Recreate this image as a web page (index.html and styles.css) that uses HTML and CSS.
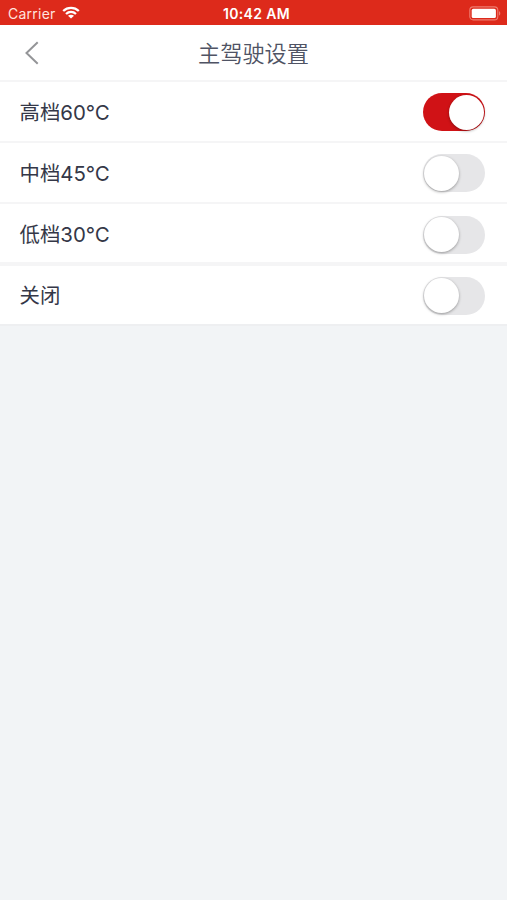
FILE: index.html
```html
<!DOCTYPE html>
<html lang="zh-CN">
<head>
<meta charset="utf-8">
<title>主驾驶设置</title>
<link rel="stylesheet" href="styles.css">
</head>
<body>
<div class="status">
  <div class="carrier">
    <span>Carrier</span>
    <svg class="wifi" width="18" height="13" viewBox="0 0 18 13" fill="none" stroke="#fff" stroke-width="2.3">
      <path d="M1.2 5C5.6.8 12.4.8 16.8 5"/>
      <path d="M4 8C6.9 5.3 11.1 5.3 14 8"/>
      <path d="M9 12.6L6 9.8C7.6 8.4 10.4 8.4 12 9.8Z" fill="#fff" stroke="none"/>
    </svg>
  </div>
  <div class="time">10:42 AM</div>
  <svg class="battery" width="32" height="15" viewBox="0 0 32 15">
    <rect x=".8" y=".9" width="28" height="13" rx="3.4" fill="none" stroke="#ee7c70" stroke-width="1.1"/>
    <rect x="2.7" y="2.8" width="24.2" height="9.2" rx="1.6" fill="#fff"/>
    <path d="M30 5.2C31.7 5.8 31.7 9 30 9.6Z" fill="#ee7c70"/>
  </svg>
</div>
<header class="navbar">
  <svg class="back" width="16" height="26" viewBox="0 0 16 26" fill="none" stroke="#949598" stroke-width="2">
    <path d="M13.7 2.3L2.5 13L13.7 23.7"/>
  </svg>
  <h1 class="title">主驾驶设置</h1>
</header>
<main class="list">
  <div class="row"><span class="label">高档60℃</span><span class="switch on"><i class="knob"></i></span></div>
  <div class="row"><span class="label">中档45℃</span><span class="switch"><i class="knob"></i></span></div>
  <div class="row row-group-end"><span class="label">低档30℃</span><span class="switch"><i class="knob"></i></span></div>
  <div class="row row-last"><span class="label">关闭</span><span class="switch"><i class="knob"></i></span></div>
</main>
</body>
</html>
```
FILE: styles.css
```css
* { box-sizing: border-box; }
body {
  margin: 0;
  min-height: 900px;
  background: #f2f4f6;
  color: #343747;
  font-family: Inter, "Noto Sans CJK SC", sans-serif;
}
.status {
  display: grid;
  grid-template-columns: 1fr auto 1fr;
  align-items: center;
  height: 25px;
  padding: 2px 6px 0 8px;
  background: #dd2a1b;
  color: #fff;
  font-size: 14px;
  line-height: 20px;
}
.carrier { display: flex; align-items: center; gap: 6px; color: #ffe3df; letter-spacing: .25px; }
.wifi { margin-bottom: 2px; }
.time { font-weight: 600; font-size: 14px; letter-spacing: .35px; margin-left: 4px; }
.battery { justify-self: end; margin-bottom: 1px; }
.navbar {
  display: grid;
  grid-template-columns: 40px 1fr 40px;
  align-items: center;
  height: 57px;
  padding: 1px 23px 0 24px;
  background: #fff;
  border-bottom: 2px solid #f5f5f6;
}
.title {
  margin: 2px 0 0 -1px;
  text-align: center;
  font-size: 22.2px;
  line-height: 32px;
  font-weight: 350;
  color: #4f5364;
}
.row {
  display: flex;
  align-items: center;
  justify-content: space-between;
  height: 61px;
  padding: 1px 22px 0 20px;
  background: #fff;
  border-bottom: 2px solid #f5f5f6;
}
.row-group-end { height: 62px; padding-top: 3px; border-bottom-width: 4px; }
.row-last { height: 60px; border-bottom-color: #eeeff1; }
.label {
  padding-top: 1px;
  font-size: 20.4px;
  line-height: 30px;
  margin-left: -.5px;
}
.switch {
  display: flex;
  width: 62.5px;
  height: 38px;
  padding: 1.5px;
  border-radius: 19px;
  background: #e6e6e8;
}
.switch.on { justify-content: flex-end; background: #d01216; }
.knob {
  width: 35px;
  height: 35px;
  border-radius: 50%;
  background: #fff;
  box-shadow: 0 1px 3px rgba(0, 0, 0, .35);
}
```
